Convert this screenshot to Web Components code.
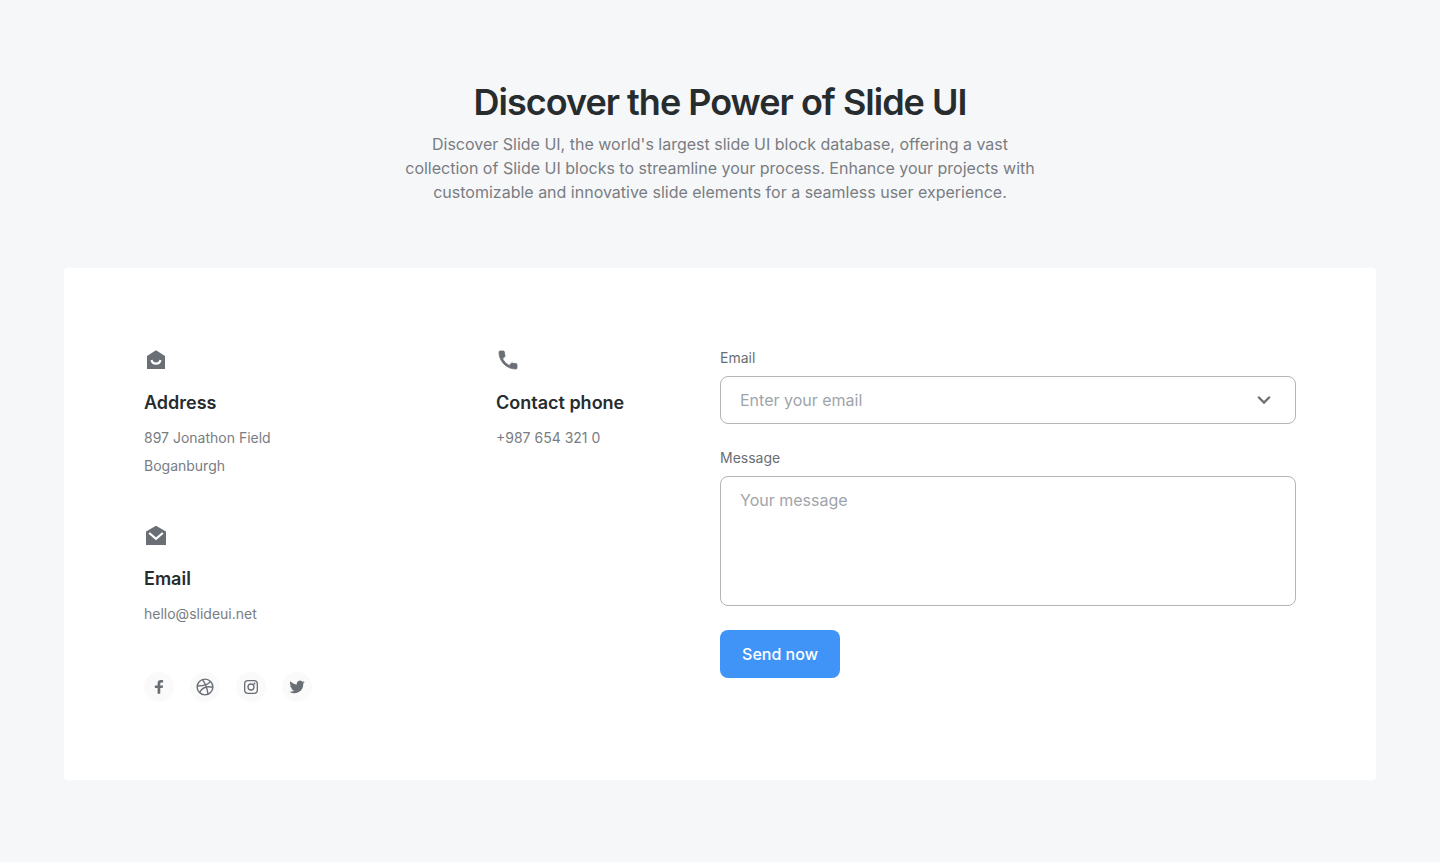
<!DOCTYPE html>
<html lang="en">
<head>
<meta charset="utf-8">
<meta name="viewport" content="width=device-width, initial-scale=1">
<title>Slide UI – Contact</title>
<style>
  :root {
    --ink: #272c2f;
    --muted: #797d82;
    --icon: #6a6e75;
    --line: #b2b5b9;
    --placeholder: #9fa4aa;
    --page: #f6f7f9;
    --accent: #4094f7;
  }
  body {
    margin: 0;
    background: var(--page);
    color: var(--ink);
    font: 400 16px/24px Inter, "Liberation Sans", sans-serif;
  }
</style>
</head>
<body>
<contact-section>
  <section-heading slot="heading">
    <span slot="title">Discover the Power of Slide UI</span>
    Discover Slide UI, the world's largest slide UI block database, offering a vast collection of Slide UI blocks to streamline your process. Enhance your projects with customizable and innovative slide elements for a seamless user experience.
  </section-heading>
  <contact-item slot="detail" icon="home" heading="Address">897 Jonathon Field<br>Boganburgh</contact-item>
  <contact-item slot="detail" icon="phone" heading="Contact phone" href="tel:+9876543210">+987 654 321 0</contact-item>
  <contact-item slot="detail" icon="mail" heading="Email" href="mailto:hello@slideui.net">hello@slideui.net</contact-item>
  <social-links slot="social"></social-links>
  <contact-form slot="form"></contact-form>
</contact-section>

<script>
const icons = {
  home: '<path d="M12 2.2 21 8v13H3V8z"/><path d="M7.500 12a4.600 4.600 0 0 0 9 0" fill="none" stroke="#fff" stroke-width="2.200"/>',
  mail: '<path d="M12 1.8 22 7.5V21H2V7.5z"/><path d="m5.200 9 6.800 5.800L18.800 9" fill="none" stroke="#fff" stroke-width="2.300"/>',
  phone: '<path d="M3 4.1C3 3.5 3.5 3 4.1 3h3.2c.6 0 1.1.5 1.1 1.1 0 1.3.2 2.5.6 3.6.1.4 0 .8-.3 1.1l-2.2 2a15 15 0 0 0 6.700 6.700l2-2.200c.3-.3.7-.4 1.100-.3 1.100.4 2.300.6 3.600.6.6 0 1.100.5 1.100 1.100v3.200c0 .6-.5 1.100-1.100 1.100C10.500 21 3 13.500 3 4.100z" stroke="currentColor" stroke-width=".8" stroke-linejoin="round"/>',
  chevron: '<path d="m6.200 8.800 5.800 5.800 5.800-5.800" fill="none" stroke="currentColor" stroke-width="2.200"/>',
  facebook: '<path d="M10.100 21v-7.700H6.500v-3.200h3.600V7.200C10.100 4.200 12 2.800 14.700 2.800c1.300 0 2.300.1 2.800.2v3.100h-1.900c-1.500 0-1.900.8-1.900 1.800v2.200h3.800l-.7 3.200h-3.100V21z"/>',
  dribbble: '<g fill="none" stroke="currentColor" stroke-width="1.900"><circle cx="12" cy="12" r="10.500"/><path d="M8.500 2.200c3.700 4.500 6.200 10.600 7.500 19.200M1.600 10.700c7.500.2 14-1.500 17.800-6.200M4.700 19.500c3.500-6.800 10-9.200 17.700-7.100"/></g>',
  instagram: '<g fill="none" stroke="currentColor" stroke-width="2"><rect x="2.500" y="2.500" width="19" height="19" rx="5"/><circle cx="12" cy="12" r="4.500"/></g><circle cx="17.300" cy="6.700" r="1.400"/>',
  twitter: '<path d="M23.600 4.900c-.9.400-1.800.6-2.700.7 1-.6 1.700-1.500 2.100-2.600-.9.500-1.900.9-3 1.100a4.700 4.700 0 0 0-8.100 4.300C8 8.200 4.500 6.300 2.200 3.500a4.700 4.700 0 0 0 1.500 6.300c-.8 0-1.500-.2-2.100-.6 0 2.200 1.600 4.200 3.800 4.700-.7.200-1.400.2-2.100.1.600 1.900 2.300 3.200 4.400 3.300A9.500 9.500 0 0 1 .7 19.200a13.400 13.400 0 0 0 20.600-12c.9-.6 1.700-1.400 2.300-2.300z"/>'
};

class BaseElement extends HTMLElement {
  connectedCallback() {
    if (this.shadowRoot) return;
    this.attachShadow({ mode: 'open' }).innerHTML =
      `<style>*{box-sizing:border-box}${this.constructor.styles}</style>${this.render()}`;
  }
}

customElements.define('ui-icon', class extends BaseElement {
  static styles = `
    :host { display: block; width: 24px; height: 24px; }
    svg { display: block; width: 100%; height: 100%; fill: currentColor; }`;
  render() {
    return `<svg viewBox="0 0 24 24" aria-hidden="true">${icons[this.getAttribute('name')]}</svg>`;
  }
});

customElements.define('section-heading', class extends BaseElement {
  static styles = `
    :host { display: block; max-width: 640px; margin: 0 auto; text-align: center; }
    h1 { margin: 0 0 8px; font-size: 36px; line-height: 44px; font-weight: 600; letter-spacing: -1px; }
    p { margin: 0; color: var(--muted); }`;
  render() { return `<h1><slot name="title"></slot></h1><p><slot></slot></p>`; }
});

customElements.define('contact-item', class extends BaseElement {
  static styles = `
    :host { display: block; }
    ui-icon { color: var(--icon); margin-bottom: 16px; }
    h2 { margin: 0 0 6px; font-size: 18px; line-height: 30px; font-weight: 600; }
    p { margin: 0; font-size: 14px; line-height: 28px; color: var(--muted); }
    a { color: inherit; text-decoration: none; }
    a:hover { text-decoration: underline; }`;
  render() {
    const href = this.getAttribute('href');
    const body = href ? `<a href="${href}"><slot></slot></a>` : '<slot></slot>';
    return `<ui-icon name="${this.getAttribute('icon')}"></ui-icon><h2>${this.getAttribute('heading')}</h2><p>${body}</p>`;
  }
});

customElements.define('social-links', class extends BaseElement {
  static styles = `
    :host { display: flex; gap: 16px; }
    a { display: grid; place-items: center; width: 30px; height: 30px; border-radius: 50%; background: #fafafb; color: var(--icon); }
    ui-icon { width: 18px; height: 18px; }
    .small { width: 16px; height: 16px; }`;
  render() {
    return [['facebook', ''], ['dribbble', ''], ['instagram', 'small'], ['twitter', 'small']].map(([n, c]) =>
      `<a href="#${n}" aria-label="${n}"><ui-icon class="${c}" name="${n}"></ui-icon></a>`).join('');
  }
});

customElements.define('contact-form', class extends BaseElement {
  static styles = `
    :host { display: block; }
    form { display: grid; gap: 24px; justify-items: start; }
    .group { display: grid; gap: 8px; width: 100%; }
    label { font-size: 14px; line-height: 20px; color: var(--icon); }
    .field { display: flex; align-items: center; height: 48px; padding: 0 19px; }
    .field, textarea { width: 100%; border: 1px solid var(--line); border-radius: 8px; background: #fff; }
    input { flex: 1; min-width: 0; padding: 0; border: 0; outline: 0; background: none; }
    input, textarea, button { font: inherit; color: var(--ink); }
    input::-webkit-calendar-picker-indicator { display: none !important; }
    textarea { display: block; height: 130px; padding: 11px 19px; resize: none; }
    ::placeholder { color: var(--placeholder); opacity: 1; }
    .toggle { padding: 0; border: 0; background: none; color: var(--icon); cursor: pointer; }
    .send { width: 120px; height: 48px; padding: 0; border: 0; border-radius: 8px; background: var(--accent); color: #fff; font-weight: 500; cursor: pointer; }
    .field:focus-within, textarea:focus { outline: 0; border-color: var(--accent); }`;
  render() {
    return `<form>
      <div class="group"><label for="email">Email</label>
        <div class="field"><input id="email" type="email" placeholder="Enter your email" list="emails">
          <datalist id="emails"><option value="hello@slideui.net"></option></datalist>
          <button class="toggle" type="button" aria-label="Show suggestions"><ui-icon name="chevron"></ui-icon></button></div></div>
      <div class="group"><label for="message">Message</label>
        <textarea id="message" placeholder="Your message"></textarea></div>
      <button class="send" type="submit">Send now</button>
    </form>`;
  }
  connectedCallback() {
    super.connectedCallback();
    const root = this.shadowRoot;
    root.querySelector('.toggle').onclick = () => root.querySelector('input').showPicker();
    root.querySelector('form').onsubmit = e => e.preventDefault();
  }
});

customElements.define('contact-section', class extends BaseElement {
  static styles = `
    :host { display: block; padding: 80px 64px; }
    .card { display: grid; grid-template-columns: 1fr 1fr; margin-top: 64px; padding: 80px 80px 78px; border-radius: 4px; background: #fff; }
    .details { display: grid; grid-template-columns: 11fr 7fr; row-gap: 44px; align-content: start; }
    slot[name=social] { display: block; margin-top: 44px; }
    @media (max-width: 1000px) {
      :host { padding: 48px 24px; }
      .card { grid-template-columns: 1fr; gap: 48px; padding: 40px; }
    }`;
  render() {
    return `<header><slot name="heading"></slot></header>
      <div class="card">
        <div><div class="details"><slot name="detail"></slot></div><slot name="social"></slot></div>
        <slot name="form"></slot>
      </div>`;
  }
});
</script>
</body>
</html>
